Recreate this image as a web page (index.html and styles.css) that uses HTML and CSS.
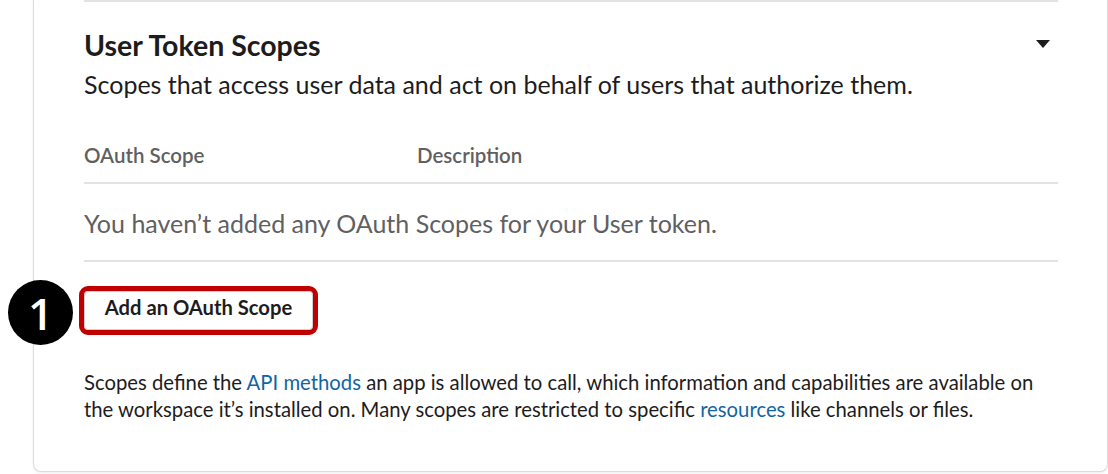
FILE: index.html
```html
<!DOCTYPE html>
<html lang="en">
<head>
<meta charset="utf-8">
<title>User Token Scopes</title>
<link rel="stylesheet" href="styles.css">
</head>
<body>
<div class="page">
  <section class="card">
    <div class="inner">
      <header class="section-head">
        <div class="head-text">
          <h2 class="title">User Token Scopes</h2>
          <p class="subtitle">Scopes that access user data and act on behalf of users that authorize them.</p>
        </div>
        <svg class="caret" width="14" height="8" viewBox="0 0 14 8" aria-hidden="true"><path d="M0 0H14L7 8Z" fill="#1d1c1d"/></svg>
      </header>
      <div class="scope-table">
        <div class="thead">
          <span class="col-scope">OAuth Scope</span>
          <span class="col-desc">Description</span>
        </div>
        <div class="empty">You haven’t added any OAuth Scopes for your User token.</div>
      </div>
      <div class="actions">
        <span class="step-badge">1</span>
        <button class="add-btn" type="button">Add an OAuth Scope</button>
      </div>
      <p class="note">Scopes define the <a href="#">API methods</a> an app is allowed to call, which information and capabilities are available on the workspace it’s installed on. Many scopes are restricted to specific <a href="#">resources</a> like channels or files.</p>
    </div>
  </section>
</div>
</body>
</html>
```
FILE: styles.css
```css
* { box-sizing: border-box; }
html, body { margin: 0; padding: 0; background: #fff; }
body {
  font-family: Lato, "Open Sans", "Liberation Sans", sans-serif;
  color: #1d1c1d;
  overflow: hidden;
}
.page {
  padding-left: 33px;
  height: 474px;
}
.card {
  position: relative;
  height: 472px;
  border: 1px solid #dcdcdc;
  border-top: none;
  border-radius: 0 0 8px 8px;
  box-shadow: 0 1px 3px rgba(0,0,0,0.08);
  background: #fff;
  padding: 0 49px 0 50px;
}
.inner {
  border-top: 2px solid #e2e2e2;
}
.section-head {
  display: flex;
  justify-content: space-between;
  align-items: flex-start;
  padding-top: 26px;
}
.title {
  margin: 0;
  font-size: 28.5px;
  font-weight: 700;
  line-height: 34px;
}
.subtitle {
  margin: 7px 0 0;
  font-size: 25px;
  line-height: 30px;
}
.caret {
  margin-top: 12px;
  margin-right: 8px;
}
.scope-table {
  margin-top: 44px;
}
.thead {
  display: flex;
  font-size: 20.5px;
  font-weight: 600;
  color: #616061;
  line-height: 24px;
  padding-bottom: 15px;
  border-bottom: 2px solid #e2e2e2;
}
.col-scope { width: 333px; }
.empty {
  font-size: 25px;
  color: #616061;
  line-height: 30px;
  padding: 24px 0 22px;
  border-bottom: 2px solid #e2e2e2;
}
.actions {
  display: flex;
  padding-top: 29px;
}
.step-badge {
  position: absolute;
  left: -26px;
  top: 280px;
  width: 65px;
  height: 65px;
  border-radius: 50%;
  background: #000;
  color: #fff;
  font-family: "Open Sans", "Liberation Sans", sans-serif;
  font-size: 44px;
  font-weight: 600;
  display: flex;
  align-items: center;
  justify-content: center;
  line-height: 1;
}
.add-btn {
  font-family: Lato, "Open Sans", "Liberation Sans", sans-serif;
  font-size: 20.2px;
  font-weight: 700;
  color: #1d1c1d;
  background: #fff;
  border: 1px solid #cfcfcf;
  border-radius: 4px;
  box-shadow: 0 1px 2px rgba(0,0,0,0.1);
  height: 39px;
  width: 229px;
  padding: 0 0 7px;
  outline: 5px solid #c00000;
  outline-offset: 0;
}
.note {
  margin: 39px 0 0;
  font-size: 20.3px;
  line-height: 27px;
}
.note a {
  color: #1264a3;
  text-decoration: none;
}
```
